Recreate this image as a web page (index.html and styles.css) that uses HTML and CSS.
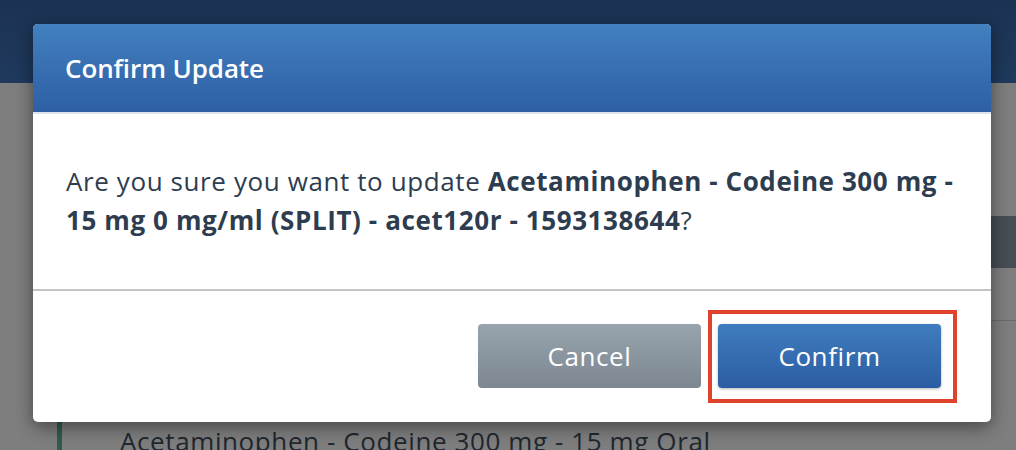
FILE: index.html
```html
<!DOCTYPE html>
<html lang="en">
<head>
<meta charset="utf-8">
<title>Confirm Update</title>
<link rel="stylesheet" href="styles.css">
</head>
<body>
<div class="page">
  <header class="topbar"></header>
  <main class="content">
    <div class="table">
      <div class="thead"></div>
      <div class="row"></div>
      <div class="row row-spacer"></div>
      <div class="row row-item"><span class="item-name">Acetaminophen - Codeine 300 mg - 15 mg Oral</span></div>
    </div>
  </main>
</div>
<div class="overlay">
  <div class="modal" role="dialog" aria-labelledby="modal-title">
    <div class="modal-header"><h2 id="modal-title" class="modal-title">Confirm Update</h2></div>
    <div class="modal-body">
      <p class="message">Are you sure you want to update <strong>Acetaminophen - Codeine 300 mg - 15 mg 0 mg/ml (SPLIT) - acet120r - 1593138644</strong>?</p>
    </div>
    <div class="modal-footer">
      <button class="btn btn-cancel" type="button">Cancel</button>
      <span class="highlight"><button class="btn btn-confirm" type="button">Confirm</button></span>
    </div>
  </div>
</div>
</body>
</html>
```
FILE: styles.css
```css
* { box-sizing: border-box; }
html, body { margin: 0; padding: 0; }
body {
  width: 1016px;
  height: 450px;
  overflow: hidden;
  position: relative;
  background: #7e7e7e;
  font-family: "Open Sans", "Liberation Sans", sans-serif;
}
.page { width: 100%; height: 100%; }
.topbar {
  height: 83px;
  background: linear-gradient(#1c3253, #1f3a5d);
}
.content { padding-top: 133px; }
.table { margin-left: 57px; }
.thead { height: 52px; background: #464d54; }
.row { height: 53px; border-bottom: 1px solid #6a6a6a; }
.row-spacer { height: 101px; border-bottom: none; }
.row-item {
  height: 40px;
  border-left: 5px solid #2f5d4a;
  border-bottom: none;
  padding-left: 58px;
  font-size: 26px;
  letter-spacing: 0.6px;
  line-height: 38px;
  color: #1f272f;
  white-space: nowrap;
}
.overlay {
  position: absolute;
  inset: 0;
  padding: 24px 0 0 33px;
}
.modal {
  width: 958px;
  height: 398px;
  background: #fff;
  border-radius: 5px;
  overflow: hidden;
  box-shadow: 0 5px 18px rgba(0,0,0,0.45);
  display: flex;
  flex-direction: column;
}
.modal-header {
  height: 90px;
  flex: none;
  display: flex;
  align-items: center;
  padding-left: 32px;
  background: linear-gradient(#4280bf, #2e5fa4);
  border-bottom: 2px solid #dfe5ec;
}
.modal-title {
  margin: 0;
  color: #fff;
  font-size: 26px;
  font-weight: 600;
  letter-spacing: -0.1px;
}
.modal-body {
  height: 177px;
  flex: none;
  padding: 48px 30px 0 33px;
  border-bottom: 2px solid #c4c4c4;
}
.message {
  margin: 0;
  font-size: 26px;
  letter-spacing: 0.6px;
  line-height: 39px;
  color: #2d3d4f;
}
.message strong { font-weight: 700; }
.modal-footer {
  flex: 1;
  display: flex;
  justify-content: flex-end;
  align-items: flex-start;
  padding: 33px 34px 0 0;
}
.btn {
  width: 223px;
  height: 64px;
  border: none;
  border-radius: 4px;
  color: #fff;
  font-family: inherit;
  font-size: 26px;
  letter-spacing: 0.6px;
  padding: 0;
  cursor: pointer;
}
.btn-cancel {
  margin-right: 7px;
  background: linear-gradient(#97a3ad, #7c8792);
}
.btn-confirm {
  display: block;
  background: linear-gradient(#3f7dbe, #2c5da2);
  box-shadow: 0 1px 3px rgba(0,0,0,0.3);
}
.highlight {
  display: block;
  margin-top: -14px;
  border: 4px solid #e0432b;
  padding: 10px 12px 11px 6px;
}
```
